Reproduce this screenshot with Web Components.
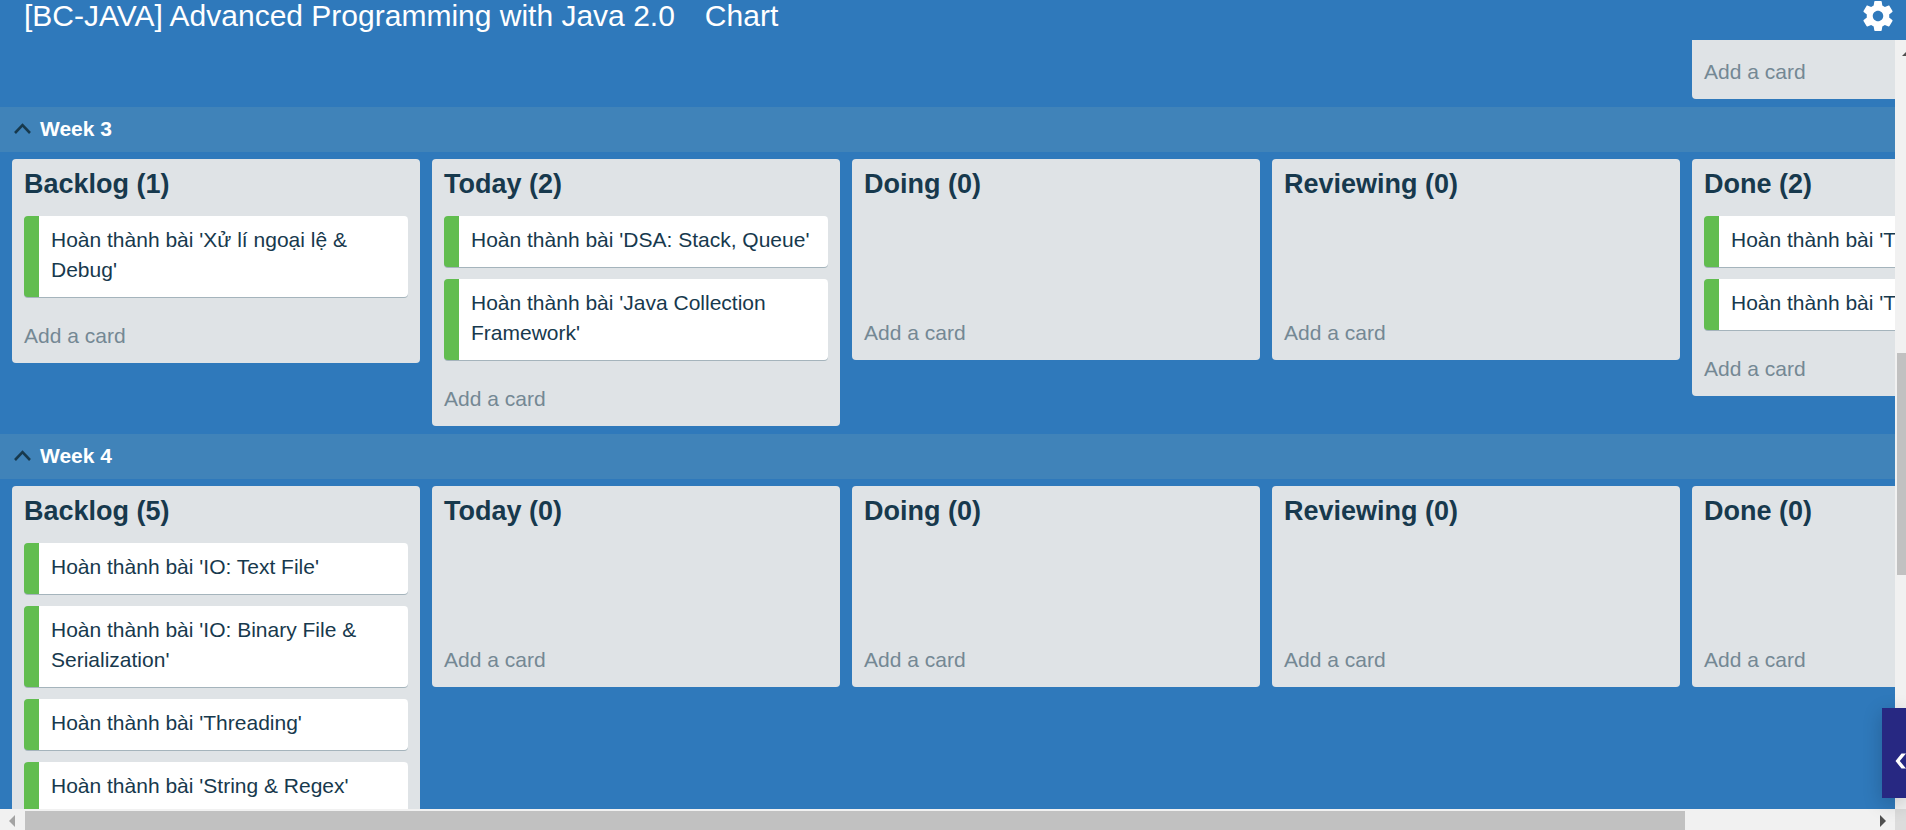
<!DOCTYPE html>
<html lang="vi">
<head>
<meta charset="utf-8">
<title>[BC-JAVA] Advanced Programming with Java 2.0</title>
<style>
  html, body { height: 100%; margin: 0; }
  body { overflow: hidden; background: #2f79bb; font: 21px/30px "Liberation Sans", Arial, sans-serif; }
</style>
</head>
<body>
<board-app>
  <board-header slot="header" heading="[BC-JAVA] Advanced Programming with Java 2.0"></board-header>

  <swim-lane>
    <card-list tail></card-list>
  </swim-lane>

  <swim-lane heading="Week 3">
    <card-list heading="Backlog (1)">
      <task-card>Hoàn thành bài 'Xử lí ngoại lệ &amp; Debug'</task-card>
    </card-list>
    <card-list heading="Today (2)">
      <task-card>Hoàn thành bài 'DSA: Stack, Queue'</task-card>
      <task-card>Hoàn thành bài 'Java Collection Framework'</task-card>
    </card-list>
    <card-list heading="Doing (0)"></card-list>
    <card-list heading="Reviewing (0)"></card-list>
    <card-list heading="Done (2)">
      <task-card>Hoàn thành bài 'T</task-card>
      <task-card>Hoàn thành bài 'T</task-card>
    </card-list>
  </swim-lane>

  <swim-lane heading="Week 4">
    <card-list heading="Backlog (5)" continued>
      <task-card>Hoàn thành bài 'IO: Text File'</task-card>
      <task-card>Hoàn thành bài 'IO: Binary File &amp; Serialization'</task-card>
      <task-card>Hoàn thành bài 'Threading'</task-card>
      <task-card>Hoàn thành bài 'String &amp; Regex'</task-card>
    </card-list>
    <card-list heading="Today (0)"></card-list>
    <card-list heading="Doing (0)"></card-list>
    <card-list heading="Reviewing (0)"></card-list>
    <card-list heading="Done (0)"></card-list>
  </swim-lane>

  <side-tab slot="tab"></side-tab>
</board-app>

<script>
const define = (name, render) => customElements.define(name, class extends HTMLElement {
  connectedCallback() {
    if (this.shadowRoot) return;
    this.attachShadow({ mode: 'open' }).innerHTML = render(this);
  }
});

define('board-app', () => `
  <style>
    :host { display: grid; grid-template: auto minmax(0, 1fr) 21px / minmax(0, 1fr) 11px; height: 100vh; overflow: hidden; }
    ::slotted([slot=header]) { grid-column: 1 / -1; }
    main { overflow: hidden; }
    .corner { background: #dcdcdc; }
  </style>
  <slot name="header"></slot>
  <main><slot></slot></main>
  <scroll-bar axis="y"></scroll-bar>
  <scroll-bar axis="x"></scroll-bar>
  <div class="corner"></div>
  <slot name="tab"></slot>
`);

define('board-header', el => `
  <style>
    :host { display: block; color: #fff; }
    header { display: flex; align-items: flex-start; height: 40px; padding: 0 10px 0 24px; gap: 30px; box-sizing: border-box; }
    h1, a { margin: 0; font-size: 30px; line-height: 32px; font-weight: 400; color: inherit; text-decoration: none; white-space: nowrap; }
    button { margin-left: auto; padding: 0; border: 0; background: none; color: inherit; width: 36px; height: 32px; display: flex; align-items: center; justify-content: center; }
    svg { flex: none; }
  </style>
  <header>
    <h1>${el.getAttribute('heading')}</h1>
    <a href="#chart">Chart</a>
    <button type="button" aria-label="Settings">
      <svg width="36" height="36" viewBox="0 0 24 24" fill="currentColor"><path d="M19.43 12.98c.04-.32.07-.64.07-.98s-.03-.66-.07-.98l2.11-1.65c.19-.15.24-.42.12-.64l-2-3.46c-.12-.22-.39-.3-.61-.22l-2.49 1c-.52-.4-1.08-.73-1.69-.98l-.38-2.65C14.46 2.18 14.25 2 14 2h-4c-.25 0-.46.18-.49.42l-.38 2.65c-.61.25-1.17.59-1.69.98l-2.49-1c-.23-.09-.49 0-.61.22l-2 3.46c-.13.22-.07.49.12.64l2.11 1.65c-.04.32-.07.65-.07.98s.03.66.07.98l-2.11 1.65c-.19.15-.24.42-.12.64l2 3.46c.12.22.39.3.61.22l2.49-1c.52.4 1.08.73 1.69.98l.38 2.65c.03.24.24.42.49.42h4c.25 0 .46-.18.49-.42l.38-2.65c.61-.25 1.17-.59 1.69-.98l2.49 1c.23.09.49 0 .61-.22l2-3.46c.12-.22.07-.49-.12-.64l-2.11-1.65zM12 15.5c-1.93 0-3.5-1.57-3.5-3.5s1.57-3.5 3.5-3.5 3.5 1.57 3.5 3.5-1.57 3.5-3.5 3.5z"/></svg>
    </button>
  </header>
`);

define('swim-lane', el => `
  <style>
    :host { display: block; }
    button { display: flex; align-items: flex-start; gap: 9px; width: 100%; height: 45px; box-sizing: border-box; padding: 7px 14px; border: 0; background: #4083b9; color: #fff; font: inherit; font-weight: 700; text-align: left; }
    svg { flex: none; margin-top: 9px; }
    .lists { display: flex; align-items: flex-start; gap: 12px; width: max-content; padding: 7px 12px 8px; }
    .lists.cut { padding-top: 0; display: grid; grid-template-columns: repeat(5, 408px); }
    .cut ::slotted(*) { grid-column: 5; }
  </style>
  ${el.hasAttribute('heading') ? `
  <button type="button" aria-expanded="true">
    <svg width="17" height="11" viewBox="0 0 17 11" fill="none" stroke="#17394d" stroke-width="2.6"><path d="M1 10 8.500 2.200 16 10"/></svg>
    <span>${el.getAttribute('heading')}</span>
  </button>` : ''}
  <div class="lists ${el.hasAttribute('heading') ? '' : 'cut'}"><slot></slot></div>
`);

define('card-list', el => el.hasAttribute('tail') ? `
  <style>
    :host { display: block; width: 408px; box-sizing: border-box; padding: 17px 12px 12px; background: #dfe3e6; border-radius: 0 0 4px 4px; }
    button { display: block; padding: 0; border: 0; background: none; font: inherit; color: #748894; }
  </style>
  <button type="button">Add a card</button>
` : `
  <style>
    :host { display: flex; flex-direction: column; width: 408px; min-height: 201px; box-sizing: border-box; padding: 7px 12px 12px; background: #dfe3e6; border-radius: 4px; }
    h3 { margin: 0 0 14px; font-size: 27px; line-height: 36px; color: #17394d; }
    .cards { display: flex; flex-direction: column; gap: 12px; flex: 1; margin-bottom: 24px; }
    button { align-self: flex-start; padding: 0; border: 0; background: none; font: inherit; color: #748894; }
  </style>
  <h3>${el.getAttribute('heading')}</h3>
  <div class="cards"><slot></slot></div>
  ${el.hasAttribute('continued') ? '' : '<button type="button">Add a card</button>'}
`);

define('task-card', () => `
  <style>
    :host { display: block; padding: 9px 9px 12px 12px; border-left: 15px solid #61bd4f; border-radius: 4px; background: #fff; color: #17394d; box-shadow: 0 1px 0 #a5b4bc; }
  </style>
  <slot></slot>
`);

define('scroll-bar', el => el.getAttribute('axis') === 'y' ? `
  <style>
    :host { display: grid; grid-template-rows: 22px 291fr 222fr 234fr; padding-left: 2px; background: #f1f1f1; overflow: hidden; }
    i { grid-row: 3; background: #c1c1c1; }
    svg { grid-row: 1; margin: 12px 0 0 5px; }
  </style>
  <svg width="10" height="4" viewBox="0 0 10 4" fill="#505050"><path d="M0 4 5 -1 10 4z"/></svg><i></i>
` : `
  <style>
    :host { display: grid; grid-template-columns: 25px 1660fr 185fr 25px; align-items: center; padding-top: 2px; background: #f1f1f1; }
    i { align-self: stretch; background: #c1c1c1; }
    svg { margin-left: 9px; }
    svg.end { grid-column: 4; margin-left: 10px; }
  </style>
  <svg width="6" height="12" viewBox="0 0 6 12" fill="#a3a3a3"><path d="M6 0v12L0 6z"/></svg>
  <i></i>
  <svg class="end" width="6" height="12" viewBox="0 0 6 12" fill="#505050"><path d="M0 0v12l6-6z"/></svg>
`);

define('side-tab', () => `
  <style>
    :host { display: block; position: fixed; right: 0; bottom: 32px; }
    button { display: flex; align-items: center; justify-content: flex-end; width: 24px; height: 90px; padding: 16px 0 0; border: 0; background: #272882; box-shadow: 0 5px 20px rgba(0, 0, 0, .2); }
  </style>
  <button type="button" aria-label="Open panel">
    <svg width="11" height="16" viewBox="0 0 11 16" fill="#fff"><path d="M6.500 .5H11L4.800 8 11 15.500H6.500L.5 8z"/></svg>
  </button>
`);
</script>
</body>
</html>
